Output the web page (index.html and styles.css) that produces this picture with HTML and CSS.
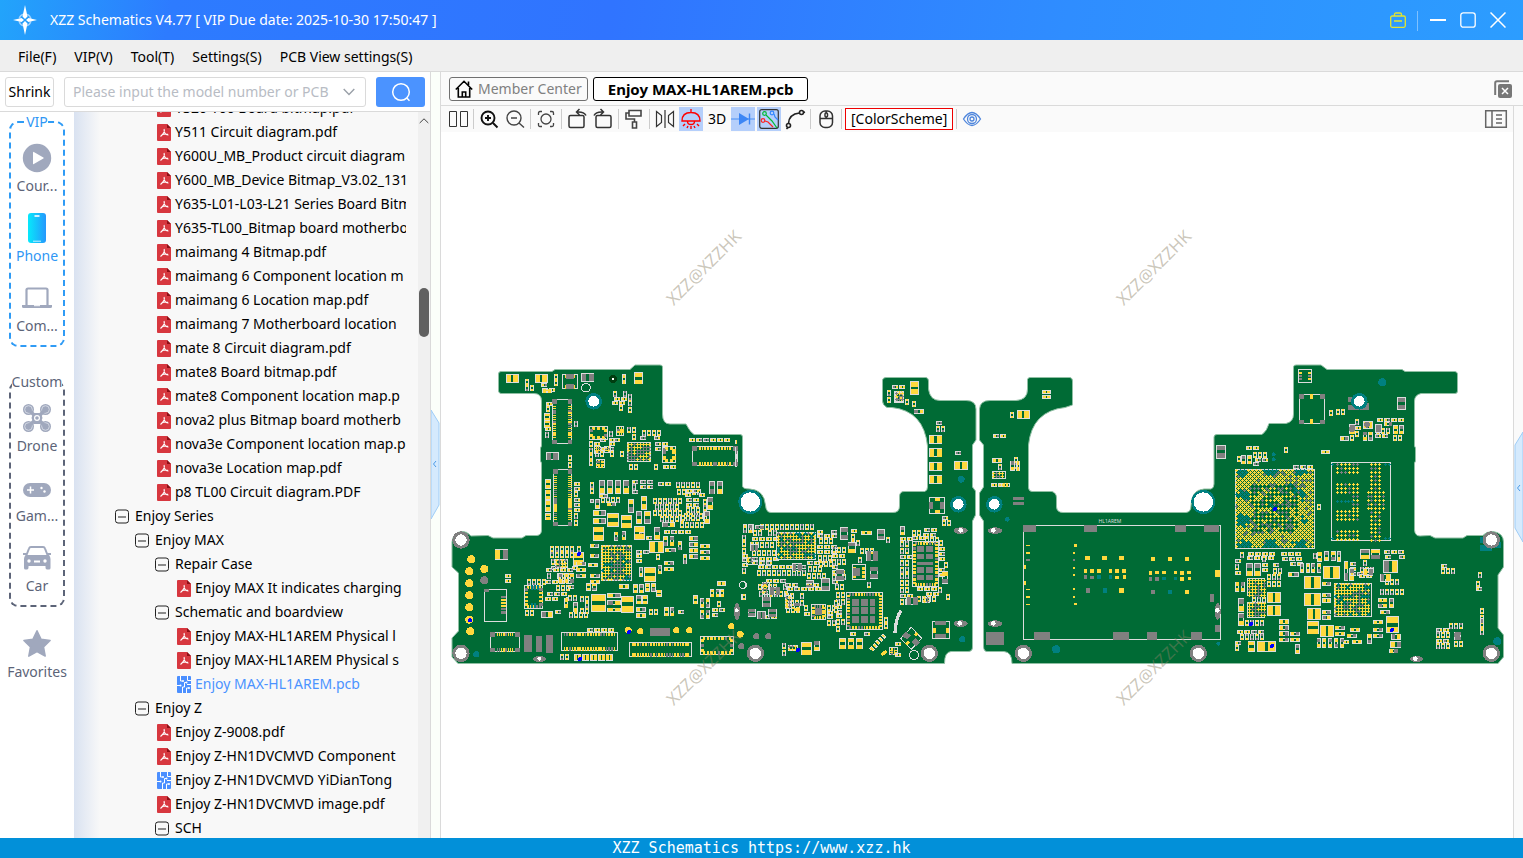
FILE: index.html
```html
<!DOCTYPE html>
<html lang="en">
<head>
  <meta charset="UTF-8" />
  <meta name="viewport" content="width=device-width, initial-scale=1.0" />
  <title>XZZ Schematics</title>
  <link rel="stylesheet" href="styles.css">
</head>
<body>
  <!-- shared icons -->
  <svg class="defs" aria-hidden="true">
    <symbol id="pdf" viewBox="0 0 14 17">
      <path d="M1 0h9l4 4v12a1 1 0 0 1-1 1H1a1 1 0 0 1-1-1V1a1 1 0 0 1 1-1z" fill="#d7373f"/>
      <path d="M10 0l4 4h-4z" fill="#8e0f16"/>
      <path d="M7 5c1 2 .5 4-3.500 7.500M7 6.500c.5 3 2 4.500 4.500 4.500M4.500 11c2-1 4-1.300 6.500-.8" fill="none" stroke="#fff" stroke-width="1.100"/>
    </symbol>
    <symbol id="pcb" viewBox="0 0 14 17">
      <rect width="14" height="17" rx="1" fill="#4b8fff"/>
      <path d="M3.500 0v5h2M0 9.500h3M5.500 17v-6h2V6.500h1.500M9.500 17v-5h2.500M14 4.500h-3.500V0M10 8.500h4" fill="none" stroke="#fff" stroke-width="1"/>
      <circle cx="6" cy="5" r="1" fill="#fff"/><circle cx="3.500" cy="9.500" r="1" fill="#fff"/><circle cx="9.500" cy="6.500" r="1" fill="#fff"/><circle cx="12" cy="12" r="1" fill="#fff"/>
    </symbol>
    <symbol id="minus" viewBox="0 0 14 14">
      <rect x=".5" y=".5" width="13" height="13" rx="2.500" fill="none" stroke="#222"/>
      <path d="M3 7.500h8" stroke="#222"/>
    </symbol>
  </svg>

  <header class="titlebar">
    <svg class="logo" viewBox="0 0 24 30">
      <circle cx="12" cy="15" r="6" fill="none" stroke="#9fd2ff" stroke-width="1.500" stroke-dasharray="6 3.400" stroke-dashoffset="-1.500"/>
      <path d="M12 0l2.500 11.500L12 14l-2.500-2.500zM12 30l2.500-11.500L12 16l-2.500 2.500zM0 15l8.500-2 2.500 2-2.500 2zM24 15l-8.500-2-2.500 2 2.500 2z" fill="#fff"/>
    </svg>
    <h1>XZZ Schematics V4.77 [ VIP Due date: 2025-10-30 17:50:47 ]</h1>
    <div class="window-buttons">
      <button aria-label="Toolbox"><svg viewBox="0 0 16 16" fill="none" stroke="#e3e52f" stroke-width="1.300"><rect x=".7" y="4" width="14.600" height="11.300" rx="1.500"/><path d="M4.500 4V2.500Q4.500 1 6 1h4q1.500 0 1.500 1.500V4M4 9h8"/></svg></button>
      <span class="divider"></span>
      <button aria-label="Minimize"><svg viewBox="0 0 16 16"><path d="M0 8h16" stroke="#fff" stroke-width="2"/></svg></button>
      <button aria-label="Maximize"><svg viewBox="0 0 16 16"><rect x=".8" y=".8" width="14.400" height="14.400" rx="2.500" fill="none" stroke="#fff" stroke-width="1.300"/></svg></button>
      <button aria-label="Close"><svg viewBox="0 0 16 16"><path d="M.5.5l15 15M15.500.5l-15 15" stroke="#fff" stroke-width="1.500"/></svg></button>
    </div>
  </header>

  <nav class="menubar">
    <button>File(F)</button>
    <button>VIP(V)</button>
    <button>Tool(T)</button>
    <button>Settings(S)</button>
    <button>PCB View settings(S)</button>
  </nav>

  <div class="workspace">
    <aside class="sidebar">
      <form class="search">
        <button type="button" class="shrink">Shrink</button>
        <div class="search-box">
          <input type="text" aria-label="Model number or PCB" placeholder="Please input the model number or PCB" />
          <svg viewBox="0 0 12 8"><path d="M.7 1L6 6.500 11.300 1" fill="none" stroke="#9aa0a8" stroke-width="1.400"/></svg>
        </div>
        <button type="button" class="search-go" aria-label="Search">
          <svg viewBox="0 0 20 20" fill="none" stroke="#fff" stroke-width="1.500"><circle cx="10" cy="10" r="8.300"/><path d="M15.800 16l2.700 2.700"/></svg>
        </button>
      </form>

      <div class="browser">
        <nav class="categories">
          <fieldset class="group vip">
            <legend>VIP</legend>
            <button class="cat"><svg viewBox="0 0 30 30"><circle cx="15" cy="15" r="14.200" fill="#a0a8bd"/><path d="M11 9.300v11.400q0 .8.800.4l9.600-5.500q.7-.5 0-1L11.800 9q-.8-.4-.8.300z" fill="#fff"/></svg>Cour...</button>
            <button class="cat active"><svg viewBox="0 0 30 30"><defs><linearGradient id="tel" x2="1" y2="0"><stop stop-color="#07e9fb"/><stop offset="1" stop-color="#2598fd"/></linearGradient></defs><rect x="6" width="18" height="30" rx="3" fill="url(#tel)"/><path d="M12.500 3h5" stroke="#fff" stroke-width="1.600"/><path d="M11 28.200h8" stroke="#c8f2ff"/></svg>Phone</button>
            <button class="cat"><svg viewBox="0 0 30 30"><path d="M4.500 23.500V7q0-1.500 1.500-1.500h18q1.500 0 1.500 1.500v16.500" fill="none" stroke="#a0a8bd" stroke-width="2.200"/><path d="M0 22h30v1.500q0 1.500-1.500 1.500h-27Q0 25 0 23.500z" fill="#a0a8bd"/><path d="M12 22.700h6" stroke="#fff" stroke-width="1"/></svg>Com...</button>
          </fieldset>
          <fieldset class="group custom">
            <legend>Custom</legend>
            <button class="cat"><svg viewBox="0 0 30 30"><g fill="#a0a8bd"><circle cx="6.500" cy="6.500" r="5.500"/><circle cx="23.500" cy="6.500" r="5.500"/><circle cx="6.500" cy="23.500" r="5.500"/><circle cx="23.500" cy="23.500" r="5.500"/></g><g fill="none" stroke="#dfe3ec" stroke-width=".8"><circle cx="6.500" cy="6.500" r="3.800"/><circle cx="23.500" cy="6.500" r="3.800"/><circle cx="6.500" cy="23.500" r="3.800"/><circle cx="23.500" cy="23.500" r="3.800"/></g><path d="M7 7l16 16M23 7L7 23" stroke="#a0a8bd" stroke-width="3.500"/><path d="M11 10h8l1.500 5-2.500 6h-6l-2.500-6z" fill="#a0a8bd"/><circle cx="15" cy="15" r="2.400" fill="none" stroke="#fff" stroke-width="1.200"/></svg>Drone</button>
            <button class="cat"><svg viewBox="0 0 30 30"><rect x="1" y="10" width="28" height="14" rx="7" fill="#a0a8bd"/><path d="M5 17h7M8.500 13.500v7" stroke="#fff" stroke-width="1.500"/><circle cx="19.500" cy="15" r="1.200" fill="#fff"/><circle cx="22.500" cy="18.500" r="1.200" fill="#fff"/></svg>Gam...</button>
            <button class="cat"><svg viewBox="0 0 30 30"><path d="M4.500 12L7 5.500Q7.500 4 9 4h12q1.500 0 2 1.500L25.500 12" fill="none" stroke="#a0a8bd" stroke-width="2"/><path d="M1 10h4v2h20v-2h4v2h-2q1.500 2 1.500 4v9q0 1.500-1.500 1.500h-2q-1.500 0-1.500-2V23h-17v1.500q0 2-1.500 2H3.500Q2 26.500 2 25v-9q0-2 1.500-4H1z" fill="#a0a8bd"/><circle cx="7" cy="18" r="1.700" fill="#fff"/><circle cx="23" cy="18" r="1.700" fill="#fff"/><path d="M12 18.500h6" stroke="#fff" stroke-width="2"/></svg>Car</button>
          </fieldset>
          <button class="cat favorites"><svg viewBox="0 0 30 30"><path d="M15 1.800l4.100 8.500 9 1.200-6.600 6.400 1.700 9.200-8.200-4.400-8.200 4.400 1.700-9.200-6.600-6.400 9-1.200z" fill="#a0a8bd" stroke="#a0a8bd" stroke-linejoin="round" stroke-width="1.500"/></svg>Favorites</button>
        </nav>

        <ul class="tree">
          <li class="lv2"><a href="#"><svg><use href="#pdf"/></svg>Y320-T00 Board bitmap.pdf</a></li>
          <li class="lv2"><a href="#"><svg><use href="#pdf"/></svg>Y511 Circuit diagram.pdf</a></li>
          <li class="lv2"><a href="#"><svg><use href="#pdf"/></svg>Y600U_MB_Product circuit diagram</a></li>
          <li class="lv2"><a href="#"><svg><use href="#pdf"/></svg>Y600_MB_Device Bitmap_V3.02_131</a></li>
          <li class="lv2"><a href="#"><svg><use href="#pdf"/></svg>Y635-L01-L03-L21 Series Board Bitm</a></li>
          <li class="lv2"><a href="#"><svg><use href="#pdf"/></svg>Y635-TL00_Bitmap board motherbo</a></li>
          <li class="lv2"><a href="#"><svg><use href="#pdf"/></svg>maimang 4 Bitmap.pdf</a></li>
          <li class="lv2"><a href="#"><svg><use href="#pdf"/></svg>maimang 6 Component location m</a></li>
          <li class="lv2"><a href="#"><svg><use href="#pdf"/></svg>maimang 6 Location map.pdf</a></li>
          <li class="lv2"><a href="#"><svg><use href="#pdf"/></svg>maimang 7 Motherboard location</a></li>
          <li class="lv2"><a href="#"><svg><use href="#pdf"/></svg>mate 8 Circuit diagram.pdf</a></li>
          <li class="lv2"><a href="#"><svg><use href="#pdf"/></svg>mate8 Board bitmap.pdf</a></li>
          <li class="lv2"><a href="#"><svg><use href="#pdf"/></svg>mate8 Component location map.p</a></li>
          <li class="lv2"><a href="#"><svg><use href="#pdf"/></svg>nova2 plus Bitmap board motherb</a></li>
          <li class="lv2"><a href="#"><svg><use href="#pdf"/></svg>nova3e Component location map.p</a></li>
          <li class="lv2"><a href="#"><svg><use href="#pdf"/></svg>nova3e Location map.pdf</a></li>
          <li class="lv2"><a href="#"><svg><use href="#pdf"/></svg>p8 TL00 Circuit diagram.PDF</a></li>
          <li class="lv0"><button><svg><use href="#minus"/></svg>Enjoy Series</button></li>
          <li class="lv1"><button><svg><use href="#minus"/></svg>Enjoy MAX</button></li>
          <li class="lv2"><button><svg><use href="#minus"/></svg>Repair Case</button></li>
          <li class="lv3"><a href="#"><svg><use href="#pdf"/></svg>Enjoy MAX It indicates charging</a></li>
          <li class="lv2"><button><svg><use href="#minus"/></svg>Schematic and boardview</button></li>
          <li class="lv3"><a href="#"><svg><use href="#pdf"/></svg>Enjoy MAX-HL1AREM Physical l</a></li>
          <li class="lv3"><a href="#"><svg><use href="#pdf"/></svg>Enjoy MAX-HL1AREM Physical s</a></li>
          <li class="lv3"><a href="#" class="current"><svg><use href="#pcb"/></svg>Enjoy MAX-HL1AREM.pcb</a></li>
          <li class="lv1"><button><svg><use href="#minus"/></svg>Enjoy Z</button></li>
          <li class="lv2"><a href="#"><svg><use href="#pdf"/></svg>Enjoy Z-9008.pdf</a></li>
          <li class="lv2"><a href="#"><svg><use href="#pdf"/></svg>Enjoy Z-HN1DVCMVD Component</a></li>
          <li class="lv2"><a href="#"><svg><use href="#pcb"/></svg>Enjoy Z-HN1DVCMVD YiDianTong</a></li>
          <li class="lv2"><a href="#"><svg><use href="#pdf"/></svg>Enjoy Z-HN1DVCMVD image.pdf</a></li>
          <li class="lv2"><button><svg><use href="#minus"/></svg>SCH</button></li>
        </ul>
        <div class="scrollbar">
          <svg viewBox="0 0 10 6"><path d="M.7 5L5 .8 9.300 5" fill="none" stroke="#444"/></svg>
          <span class="thumb"></span>
        </div>
      </div>
    </aside>

    <button class="splitter" aria-label="Collapse sidebar">
      <svg viewBox="0 0 9 110"><path d="M0 0l8 13v82L0 109z" fill="#d5eafd" stroke="#9fcdf7"/><path d="M5 51L2.500 54 5 57" fill="none" stroke="#4b9be8"/></svg>
    </button>

    <main class="viewer">
      <div class="tabs">
        <button class="tab home"><svg viewBox="0 0 18 18" fill="none" stroke="#000" stroke-width="1.600"><path d="M.8 9.500L9 1.300l8.200 8.200M3.300 8v9h11.400V8M7.300 17v-5h3.400v5M13.500 5V1.500"/></svg>Member Center</button>
        <button class="tab open">Enjoy MAX-HL1AREM.pcb</button>
        <button class="close-all" aria-label="Close all tabs"><svg viewBox="0 0 18 18"><path d="M1.200 15V3q0-1.800 1.800-1.800h12" fill="none" stroke="#777" stroke-width="2"/><rect x="4" y="4" width="14" height="14" rx="2" fill="#777"/><path d="M8 8l6 6M14 8l-6 6" stroke="#fff" stroke-width="1.500"/></svg></button>
      </div>

      <div class="view-row">
        <div class="view">
          <div class="toolbar">
            <button aria-label="Split view"><svg viewBox="0 0 24 24" fill="none" stroke="#333"><path d="M3.500 4.500h7v15h-7zM14.500 4.500h7v15h-7z"/></svg></button>
            <span class="sep"></span>
            <button aria-label="Zoom in"><svg viewBox="0 0 24 24" fill="none" stroke="#111" stroke-width="1.900"><circle cx="11" cy="11" r="6.500"/><path d="M16 16l4.500 4.500M8 11h6M11 8v6"/></svg></button>
            <button aria-label="Zoom out"><svg viewBox="0 0 24 24" fill="none" stroke="#444" stroke-width="1.400"><circle cx="11" cy="11" r="7"/><path d="M16 16l5 4.500M8 11h6"/></svg></button>
            <span class="sep"></span>
            <button aria-label="Fit"><svg viewBox="0 0 24 24" fill="none" stroke="#444" stroke-width="1.300"><circle cx="12" cy="12" r="5"/><path d="M4.500 8V6q0-1.500 1.500-1.500h2M16 4.500h2q1.500 0 1.500 1.500v2M19.500 16v2q0 1.500-1.500 1.500h-2M8 19.500H6q-1.500 0-1.500-1.500v-2"/></svg></button>
            <span class="sep"></span>
            <button aria-label="Rotate left"><svg viewBox="0 0 24 24" fill="none" stroke="#333" stroke-width="1.500"><rect x="4" y="8.500" width="15" height="12" rx="1.500"/><path d="M21 8.500Q19 4.500 12 5M14.500 2L11.500 5l3 3"/></svg></button>
            <button aria-label="Rotate right"><svg viewBox="0 0 24 24" fill="none" stroke="#333" stroke-width="1.500"><rect x="5" y="8.500" width="15" height="12" rx="1.500"/><path d="M3 8.500Q5 4.500 12 5M9.500 2l3 3-3 3"/></svg></button>
            <span class="sep"></span>
            <button aria-label="Paint"><svg viewBox="0 0 24 24" fill="none" stroke="#444" stroke-width="1.600"><path d="M7 3.500h12v5.500H7zM7 6H4v6h8.500v3M10.500 15h4v6h-4z"/></svg></button>
            <span class="sep"></span>
            <button aria-label="Mirror"><svg viewBox="0 0 24 24" fill="none" stroke="#333" stroke-width="1.200"><path d="M3.500 4.500v15l5-4v-7zM20.500 4.500v15l-5-4v-7zM12 3v18"/></svg></button>
            <button class="on" aria-label="Layer light"><svg viewBox="0 0 24 24" fill="none" stroke="#f00" stroke-width="1.400"><path d="M12 2v3M3 14q0-8.500 9-8.500t9 8.500zM8.500 14.500q0 3 3.500 3t3.500-3M6 17l-2 2M18 17l2 2M9 19l-1 2M15 19l1 2M12 19v3"/></svg></button>
            <button class="text">3D</button>
            <button class="on" aria-label="Diode"><svg viewBox="0 0 24 24"><path d="M0 12h24" stroke="#4a90f5" stroke-width="1"/><path d="M8 6v12l10-6z" fill="#3c86f5"/><path d="M18.500 6.500v11" stroke="#3c86f5" stroke-width="1.400"/></svg></button>
            <button class="on" aria-label="Nets"><svg viewBox="0 0 24 24" fill="none" stroke-width="1.200"><rect x="2.700" y="2.700" width="18.600" height="18.600" rx="2" stroke="#333"/><path d="M9 8l6 6 5 7" stroke="#0b3"/><circle cx="7.500" cy="6.500" r="1.800" stroke="#0b3"/><path d="M17 7l1 3 3 3" stroke="#38f"/><circle cx="15" cy="6" r="1.800" stroke="#38f"/><path d="M8 14l3 1 5 5" stroke="#f22"/><circle cx="6" cy="13.500" r="1.800" stroke="#f22"/></svg></button>
            <button aria-label="Trace"><svg viewBox="0 0 24 24" fill="none" stroke="#222" stroke-width="1.600"><circle cx="5.500" cy="18.500" r="2"/><circle cx="18.500" cy="5.500" r="2"/><path d="M5.500 16.500Q6 7 16.500 6M20.500 5.500l1.500-.5M5 20.500l-1.500 1.500"/></svg></button>
            <span class="sep"></span>
            <button aria-label="Mouse"><svg viewBox="0 0 24 24" fill="none" stroke="#333" stroke-width="1.500"><rect x="6" y="4" width="12.500" height="16.500" rx="5"/><path d="M6 11.500h12.500M12.200 4v2M12.200 9.500v2"/><rect x="11" y="6" width="2.500" height="4" rx="1"/></svg></button>
            <span class="sep"></span>
            <button class="scheme">[ColorScheme]</button>
            <span class="sep"></span>
            <button aria-label="Visibility"><svg viewBox="0 0 24 24" fill="none" stroke="#4f86dc" stroke-width="1.300"><path d="M3.500 12Q12-1 20.500 12 12 25 3.500 12z"/><circle cx="12" cy="12" r="4.500"/><circle cx="12" cy="12" r="2"/></svg></button>
            <button class="panel-toggle" aria-label="Toggle panel"><svg viewBox="0 0 24 24" fill="none" stroke="#666" stroke-width="1.500"><path d="M1.700 3.700h20.600v16.600H1.700zM8 3.700v16.600M12 8h6M12 12h6M12 16h6"/></svg></button>
          </div>
          <svg class="board" id="board" viewBox="441 132 1072 706" role="img" aria-label="HL1AREM board view"></svg>
        </div>
        <button class="splitter right" aria-label="Expand panel">
          <svg viewBox="0 0 9 110"><path d="M9 0L1 13v83l8 14z" fill="#d5eafd" stroke="#9fcdf7"/><path d="M6 53L3.500 56 6 59" fill="none" stroke="#4b9be8"/></svg>
        </button>
      </div>
    </main>
  </div>

  <footer class="statusbar">XZZ Schematics https://www.xzz.hk</footer>

  <script src="board.js"></script>
</body>
</html>
```

FILE: styles.css
```css
:root {
  --line: #dadada;
  --blue: #4b93ff;
  --on: #b5cffb;
  --text: #000;
  --muted: #5c6478;
}

* {
  box-sizing: border-box;
}

body {
  margin: 0;
  height: 100vh;
  display: flex;
  flex-direction: column;
  overflow: hidden;
  font-family: "Noto Sans", "Open Sans", sans-serif;
  font-size: 14px;
  line-height: 20px;
  color: var(--text);
  background: #fff;
}

button, input {
  font: inherit;
  color: inherit;
}

button {
  padding: 0;
  border: 0;
  background: none;
  cursor: pointer;
}

svg {
  display: block;
  flex: none;
}

.defs {
  position: absolute;
  width: 0;
  height: 0;
}

/* title bar */
.titlebar {
  display: flex;
  align-items: center;
  height: 40px;
  flex: none;
  padding: 0 17px 0 13px;
  color: #fff;
  background: linear-gradient(100deg, #22a4fb 0, #2d7bff 170px, #3074ff 40%, #2f8dff 70%, #2c9dff 100%);
}

.logo {
  width: 24px;
  height: 30px;
}

.titlebar h1 {
  margin: 0 auto 0 13px;
  font-size: 14px;
  font-weight: 400;
}

.window-buttons {
  display: flex;
  align-items: center;
  gap: 14px;
}

.window-buttons svg {
  width: 16px;
  height: 16px;
}

.window-buttons .divider {
  width: 1px;
  height: 20px;
  margin: 0 -2px -1px -3px;
  background: #7fc1ff;
}

/* menu */
.menubar {
  display: flex;
  align-items: center;
  gap: 18px;
  height: 32px;
  flex: none;
  padding: 2px 18px 0;
  background: #efefef;
  border-bottom: 1px solid var(--line);
}

.workspace {
  display: flex;
  flex: 1;
  min-height: 0;
}

/* sidebar */
.sidebar {
  display: flex;
  flex-direction: column;
  width: 431px;
  flex: none;
  border-right: 1px solid var(--line);
}

.search {
  display: flex;
  align-items: center;
  height: 40px;
  flex: none;
  padding: 0 5px;
  border-bottom: 1px solid var(--line);
}

.shrink {
  width: 49px;
  height: 30px;
  border: 1px solid var(--line);
  border-radius: 3px;
}

.search-box {
  display: flex;
  align-items: center;
  flex: 1;
  height: 30px;
  margin: 0 10px;
  padding: 0 10px 0 8px;
  border: 1px solid var(--line);
  border-radius: 3px;
}

.search-box input {
  flex: 1;
  min-width: 0;
  padding: 0;
  border: 0;
  outline: 0;
  background: none;
}

.search-box input::placeholder {
  color: #b8bcc4;
}

.search-box svg {
  width: 12px;
  height: 8px;
}

.search-go {
  display: grid;
  place-items: center;
  width: 49px;
  height: 30px;
  border-radius: 3px;
  background: var(--blue);
}

.search-go svg {
  width: 20px;
  height: 20px;
}

.browser {
  display: flex;
  flex: 1;
  min-height: 0;
}

.categories {
  width: 74px;
  flex: none;
  padding: 0 9px;
  color: var(--muted);
}

.group {
  min-width: 0;
  margin: 0 0 25px;
  padding: 11px 0 9px;
  border: 2px dashed #2f9bf5;
  border-radius: 9px;
}

.group legend {
  margin: 0 auto;
  padding: 0;
}

.vip legend,
.cat.active {
  color: #2f97f5;
}

.custom {
  border-color: var(--muted);
  margin-bottom: 22px;
}

.cat {
  display: flex;
  flex-direction: column;
  align-items: center;
  gap: 3px;
  width: 100%;
  white-space: nowrap;
}

.cat + .cat {
  margin-top: 17px;
}

.cat svg {
  width: 30px;
  height: 30px;
}

/* file tree */
.tree {
  flex: 1;
  min-width: 0;
  margin: 0;
  padding: 0 12px 0 41px;
  list-style: none;
  overflow: hidden;
  background: linear-gradient(90deg, #d9e2f1, #f8f8f8 26px);
}

.tree li {
  height: 24px;
  overflow: hidden;
  white-space: nowrap;
}

.tree li:first-child {
  margin-top: -16px;
}

.tree a,
.tree button {
  display: flex;
  align-items: center;
  height: 24px;
  color: inherit;
  text-decoration: none;
}

.tree a.current {
  color: var(--blue);
}

.tree svg {
  width: 14px;
  height: 17px;
  margin-right: 6px;
}

.tree a svg {
  margin: 0 4px 0 2px;
}

.lv1 { padding-left: 20px; }
.lv2 { padding-left: 40px; }
.lv3 { padding-left: 60px; }

.scrollbar {
  width: 12px;
  padding: 6px 1px;
  background: #f0f0f0;
}

.scrollbar svg {
  width: 10px;
  height: 6px;
}

.thumb {
  display: block;
  width: 10px;
  height: 49px;
  margin-top: 164px;
  border-radius: 5px;
  background: #606060;
}

.splitter {
  display: flex;
  align-items: center;
  width: 10px;
  flex: none;
  padding-top: 20px;
  background: #fbfffa;
  border-right: 1px solid var(--line);
}

.splitter svg {
  width: 9px;
  height: 110px;
}

.splitter.right {
  padding-top: 30px;
  background: #fafafa;
  border-right: 0;
  border-left: 1px solid var(--line);
}

/* viewer */
.viewer {
  display: flex;
  flex-direction: column;
  flex: 1;
  min-width: 0;
}

.tabs {
  display: flex;
  align-items: center;
  gap: 5px;
  height: 34px;
  flex: none;
  padding: 0 11px 0 8px;
  background: #fafafa;
  border-bottom: 1px solid var(--line);
}

.tab {
  display: flex;
  align-items: center;
  height: 24px;
  padding: 0 5px;
  border: 1px solid #707070;
  border-radius: 3px;
  color: #808080;
}

.tab svg {
  width: 18px;
  height: 18px;
  margin-right: 5px;
}

.tab.open {
  padding: 0 14px;
  border-color: #000;
  color: #000;
  font-size: 15px;
  font-weight: 700;
  background: #fff;
}

.close-all {
  margin-left: auto;
}

.close-all svg {
  width: 18px;
  height: 18px;
}

.view-row {
  display: flex;
  flex: 1;
  min-height: 0;
}

.view {
  display: flex;
  flex-direction: column;
  flex: 1;
  min-width: 0;
}

.toolbar {
  display: flex;
  align-items: center;
  gap: 2px;
  height: 26px;
  flex: none;
  padding: 0 5px;
  background: #fafafa;
}

.toolbar button,
.toolbar svg {
  width: 24px;
  height: 24px;
}

.toolbar .on {
  background: var(--on);
}

.toolbar .sep {
  width: 1px;
  height: 20px;
  margin: 0 1px;
  background: #ccc;
}

.toolbar .scheme {
  width: auto;
  height: 22px;
  padding: 0 5px;
  border: 1px solid #e00;
  line-height: 20px;
  background: #fff;
}

.toolbar .panel-toggle {
  margin-left: auto;
}

.board {
  width: 100%;
  flex: 1;
  min-height: 0;
}

.board .silk {
  fill: none;
  stroke: #dcdcdc;
  stroke-width: 3;
}

.board .edge {
  fill: #006b35;
  stroke: #8fbfa3;
  stroke-width: 1;
}

.board .mark {
  font-size: 17px;
  fill: #8c8268;
  fill-opacity: .45;
  text-anchor: middle;
}

.board .ref {
  font-size: 5px;
  fill: #dcdcdc;
  text-anchor: middle;
}

.statusbar {
  height: 20px;
  flex: none;
  text-align: center;
  color: #fff;
  background: #0290d9;
  font-family: "DejaVu Sans Mono", monospace;
  font-size: 15px;
}
```

FILE: board.js
```js
const COLORS = { y: "#ffd83d", g: "#808080", t: "#008080", b: "#0000ff", w: "#ffffff", s: "#dcdcdc", k: "#003d10", n: "#006b35" };

// board edges, in view units
const OUTLINES = [
  "M501 371.500H552L555 369.500H630L635 365H660Q662.500 365 662.500 367V414Q662.500 424 670 424H686Q690 432 694 434.500H740Q742.500 434.500 742.500 437V486Q742.500 489 750 489Q764 490 765.500 505Q766 512.500 771 512.500H893Q899.500 512.500 899.500 506V497Q899.500 491.500 904 491.500H925Q927.500 490 927.500 487V446Q924 411 892 407.500H887Q882.500 405 882.500 401V380Q883 377.500 886 377.500H926Q928.500 378 928.500 381V389Q930 400.500 940 400.500H966Q976 400.500 976 409V440L972.500 445V487L975.500 491V515L972.500 521V647Q972.500 651.500 968 651.500H951Q944.500 652 944.500 663.500H458L452 657V638L458.500 631V573L452 567V542Q453 533 461 531.500Q467 531 471 536L488 535.500L493 538H522L526 535.500H537Q541.500 535 541.500 530V463L540.500 461V448L541.500 446V401Q541.500 393.500 534 393.500H501Q498.500 393 498.500 391V374Q498.500 371.500 501 371.500Z",
  "M979.500 409Q980 400.500 990 400.500H1016Q1027.500 400 1027.500 389V379.500Q1028 377.500 1030 377.500H1070Q1072.500 378 1072.500 381V405L1065 407.500Q1032 411 1028.500 445V488Q1029 491.500 1032 491.500H1052Q1056.500 493 1056.500 498V507Q1057 512.500 1063 512.500H1186Q1191 512 1191 506Q1191 490 1204 489H1211Q1214 488 1214 484V437Q1214 434.500 1217 434.500H1262Q1267 431 1269 423.500H1286Q1293.500 422 1293.500 414V367Q1293.500 365 1296 365H1321L1327 369.500H1402L1405 371.500H1455Q1457.500 372 1457.500 374V391Q1457.500 393.500 1455 393.500H1421Q1414.500 395 1414.500 401V446L1415.500 448V461L1414.500 463V530Q1415 536 1420 536L1430 535.500L1435 538H1463L1467 535.500H1483Q1486 531.500 1493 531.500Q1503.500 533 1503.500 542V567L1498 575V628L1503.500 635V657L1498 663.500H1012Q1012 652 1004 651.500H988Q983.500 652 983.500 646V521L979.500 515V493L983.500 487V445L979.500 440Z"
];

// Each sheet is drawn at three units per view unit from its own origin.
// parts: x y w h padColors    chips: x y w h padsAcross padsDown corner(0/1)
// fields: x y w h fill%       balls: x y w h pitch colors
// dots: x y r color           holes: x y outer inner color
const SHEETS = [
  {
    origin: [445, 355],
    parts: `183 58 38 25 yy;270 58 38 25 yy;408 55 40 25 gg;531 58 11 30 yy;567 52 26 36 yy;303 291 38 25 gg;291 101 29 14 yy;
      297 174 19 24 yy;297 196 19 22 yy;462 376 17 40 gy;486 376 17 40 gy;510 376 17 40 gy;534 376 19 40 gy;792 378 17 40 gg;816 378 17 40 gy;
      550 432 16 41 yg;588 423 17 41 yy;574 468 16 38 gy;598 468 19 38 yg;786 426 19 38 gy;778 468 16 38 gy;445 466 38 16 yg;445 490 38 16 yg;
      486 474 35 42 yy;528 480 32 40 yy;444 515 32 42 yy;567 514 32 40 yy;628 517 18 38 gy;652 502 38 15 gy;612 559 44 34 yy;598 636 34 44 yy;
      438 718 45 52 yy;528 723 38 50 yy;385 592 31 40 yy;149 583 41 31 yg;732 544 28 13 yg;732 562 28 13 gy;732 580 28 13 yy;732 598 28 13 yg;
      765 567 29 13 yy;765 585 29 13 yg;765 603 29 13 yy;435 566 27 13 yg;435 596 27 12 yg;430 624 28 12 yy;462 418 26 11 yg;485 442 28 12 yg;
      393 620 30 13 yg;393 638 30 13 yy;393 656 30 13 gy;435 656 30 13 yg;435 674 30 13 yy;486 714 42 15 yg;486 736 42 15 gy;486 758 42 13 yy;
      565 688 14 27 yy;583 688 14 27 gy;601 684 14 27 yy;618 684 14 27 yg;574 720 16 28 gy;592 720 16 28 yy;574 756 28 14 yg;574 774 28 14 yy;
      423 684 15 24 yy;440 684 15 24 yg;521 688 30 13 yy;658 756 13 28 yy;675 756 13 28 gy;816 678 26 14 yy;796 702 12 25 yy;812 702 12 25 gy;826 702 12 25 yy;
      766 730 12 28 gy;782 730 12 28 yg;766 764 12 28 yg;782 764 12 28 gy;744 720 14 28 yy;288 768 36 20 gy;
      387 898 22 19 yy;411 898 22 19 yy;435 898 22 19 yy;459 898 22 19 yy;482 898 22 19 yy;655 544 14 30 yg;674 544 14 30 gy;698 558 12 28 yg;
      658 618 28 13 yg;658 636 28 13 yy;638 630 12 28 gy;714 598 12 30 yg;582 636 12 30 gy;634 704 16 22 yy;300 372 17 30 yy;300 404 17 30 yy;300 436 17 34 yy;300 474 17 22 yy;
      660 580 32 12 yg;508 530 12 28 yg;530 528 12 28 gy;450 432 14 30 gy;340 655 14 30 gy;357 655 14 30 yy;374 655 14 30 yg;384 742 14 30 gy;358 728 12 32 yy;436 432 10 12 gg`,
    chips: `352 58 48 45 2 0 0;322 133 60 135 0 15 1;325 343 57 171 0 22 1;433 214 55 40 3 2 0;742 274 136 60 12 0 1;652 274 42 50 2 2 0;
      118 703 67 99 0 0 0;238 691 57 70 5 5 0;136 832 88 60 8 0 1;349 832 169 57 20 0 0;553 862 187 45 22 0 0;766 844 100 57 8 3 0;514 214 24 28 2 2 0;452 312 28 28 2 2 0;478 272 20 22 2 2 0;447 272 22 24 2 2 0`,
    fields: `303 125 18 45 90;300 215 18 30 90;388 180 18 45 90;388 380 20 155 85;433 258 15 82 95;492 216 20 84 90;445 250 90 65 70;545 205 25 52 90;585 225 64 32 90;
      545 328 42 16 95;612 328 34 14 80;630 260 40 35 70;655 330 40 14 80;370 300 16 30 90;436 380 22 45 90;560 376 18 40 90;585 376 32 28 90;630 380 55 24 90;
      690 380 80 40 95;622 430 94 78 92;716 402 55 84 95;700 480 76 30 90;655 524 90 18 90;775 412 18 140 70;328 58 16 30 90;240 72 30 32 80;285 85 44 24 70;
      500 108 48 68 85;550 118 16 54 90;330 112 64 10 50;466 425 56 16 80;310 574 80 70 85;300 640 84 100 85;395 572 22 14 90;180 658 22 34 90;
      240 672 60 14 70;240 766 30 18 80;330 766 18 18 80;365 772 70 16 90;400 818 110 12 90;345 898 40 20 90;730 250 148 16 90;612 762 26 24 90;
      700 764 18 18 90;800 738 34 54 65;404 724 28 44 80;556 530 60 24 70;574 570 30 55 70;632 596 30 18 90;370 690 24 50 70;888 716 16 20 90`,
    balls: `546 262 72 60 9 yyyg;468 570 94 108 9 yyyygt;330 612 40 26 9 yyyg`,
    rects: `363 57 24 15 g;363 87 24 15 g;237 841 24 50 g;273 843 18 48 g;303 841 21 52 g;614 820 61 23 g;
      168 724 16 6 g;168 733 16 6 y;168 742 16 6 y;168 751 16 6 y;168 760 16 6 g;168 769 16 9 g;118 703 14 9 g;258 691 6 15 t;267 691 6 15 t;276 691 6 15 t;258 744 6 15 t;267 744 6 15 t`,
    ellipses: `283 912 20 9;876 769 9 26`,
    dots: `79 613 12 y;73 649 12 y;118 642 12 y;118 676 12 g;73 685 12 y;73 721 12 y;73 757 12 y;73 794 12 y;75 796 6 b;76 829 12 y;550 826 10 y;552 831 6 b;586 829 9 y;694 826 9 y;733 826 9 y;859 814 9 y;
      886 838 9 y;934 844 9 g;889 874 9 g;94 898 9 t;402 597 6 b;405 912 6 b;283 911 6 w;875 766 6 w`,
    holes: `446 139 25 16 t;48 555 26 17 g;48 895 26 17 g;931 895 26 17 g;916 441 36 29 t;504 72 12 4 k`,
    rings: `423 98 13;893 690 10`
  },
  {
    origin: [735, 370],
    parts: `525 34 26 40 yy;582 195 40 26 yy;582 234 40 28 yy;582 276 40 26 yy;582 315 40 26 yy;658 273 40 26 yy;536 117 30 15 gy;846 120 38 26 yy;921 60 26 12 yy;921 75 26 12 yy;
      316 472 24 38 gg;338 516 24 34 gy;426 478 24 32 gg;394 542 36 32 gg;302 598 26 34 gg;404 590 26 36 gg;258 624 26 38 gg;198 816 32 40 yy;312 804 20 34 yy;338 804 20 34 yy;364 804 20 34 yy;
      378 482 32 12 yy;620 603 20 38 yg;24 462 12 28 yg;40 462 14 28 gy;60 466 28 12 gg;495 468 14 28 gy;236 812 18 30 gy;844 272 11 32 yy;825 272 14 30 gy;772 264 28 14 yy;
      172 580 30 24 gg;212 630 24 24 gg;104 650 32 26 gg;82 680 26 32 gg;514 680 36 26 gg;38 716 24 24 gg;100 716 26 26 gg;66 724 26 24 gg;46 522 24 22 gg;176 698 20 26 gy;0 209 7 14 yy;0 230 7 60 gg`,
    chips: `334 667 109 113 11 11 0;532 514 79 136 8 12 0;229 703 45 46 4 4 0;352 583 40 48 0 3 0;583 381 46 50 1 0 0;592 754 52 52 0 1 0;478 62 30 36 3 3 0;798 338 28 14 2 0 0;462 832 26 24 2 2 0`,
    fields: `457 38 14 60 90;472 34 38 28 80;510 88 18 26 80;530 94 28 24 70;604 152 28 34 80;660 242 18 20 90;622 438 26 32 80;768 192 42 16 90;768 282 42 16 80;768 338 34 14 90;
      788 250 20 12 80;838 260 18 90 65;820 300 20 20 80;825 126 10 18 90;
      22 494 22 110 80;44 462 80 70 90;100 462 140 22 95;46 540 80 44 90;62 584 150 44 96;210 574 60 44 92;244 480 56 110 92;290 530 40 120 80;66 628 90 60 85;150 640 104 32 92;
      146 668 60 56 85;22 672 16 18 90;40 736 104 22 70;206 704 20 42 90;276 704 24 60 85;302 666 28 114 90;348 476 26 60 80;454 482 14 40 90;372 534 64 14 80;370 560 18 20 90;
      396 636 34 16 90;300 642 30 14 90;496 500 32 204 95;530 480 34 28 95;564 474 50 38 90;612 510 24 110 85;544 652 60 46 92;600 650 44 34 70;446 740 14 30 90;340 786 60 16 80;
      142 820 16 40 90;236 842 28 12 80;480 816 22 52 70;296 690 16 60 70`,
    balls: `124 485 118 84 9 yyygt;770 304 42 24 9 yyyg;480 66 26 30 9 yyg;150 676 22 40 9 yyg;562 680 22 18 9 yyg;158 824 30 18 9 yyg;80 636 24 40 9 yyg;34 560 20 24 9 yyg`,
    rects: `350 686 22 22 g;377 686 22 22 g;404 686 16 22 g;350 711 22 22 g;377 711 22 22 g;404 711 16 22 g;350 738 22 22 g;377 738 22 22 g;404 738 16 22 g;
      546 528 21 18 g;573 528 21 18 g;546 552 21 15 g;573 552 21 15 g;546 576 48 9 g;546 591 21 18 g;573 591 21 18 g;546 614 21 15 g;573 614 21 15 g;240 714 21 21 g;354 594 21 24 g;
      583 396 12 21 g;615 396 12 21 g;600 754 33 12 g;600 793 33 12 g;753 786 54 39 g;834 381 33 9 g;834 396 33 9 g`,
    ellipses: `677 482 21 10;780 482 21 10;677 761 21 10;780 761 21 10`,
    dots: `16 793 10 y;64 799 9 g;100 799 9 g;19 829 9 g;189 840 6 b;679 328 10 t;682 808 9 t;817 448 7 t;963 838 12 t;677 481 7 w;775 481 7 w;674 760 7 w;775 760 7 w`,
    holes: `670 403 25 16 t;778 403 25 16 t;583 850 26 17 g;865 850 26 17 g`,
    rings: `24 645 11;537 855 14`,
    extra: `<path d="M499 722Q482 742 480 790" fill="none" stroke="#dcdcdc" stroke-width="10"/>
      <path class="silk" d="M529 772L560 805L529 838L497 805Z"/><path d="M502 797l12-12 14 12-12 12zM530 817l12-12 14 12-12 12z" fill="#808080"/><path d="M536 794l8-8 6 6-8 8zM510 820l8-8 6 6-8 8z" fill="#ffd83d"/>
      <path d="M408 840L452 792" fill="none" stroke="#dcdcdc" stroke-width="15" stroke-dasharray="9 4"/><path d="M409 839L452 792" fill="none" stroke="#ffd83d" stroke-width="9" stroke-dasharray="6 7"/><path d="M440 855l14-12" stroke="#ffd83d" stroke-width="9"/>`
  },
  {
    origin: [1180, 355],
    parts: `108 270 29 41 gg;651 126 26 38 gg;372 664 50 37 yy;372 714 50 38 yy;429 633 50 38 yy;381 759 41 35 yy;381 799 35 39 yy;421 811 40 34 yy;261 711 41 32 yy;261 750 41 32 yy;
      198 624 20 40 gy;222 624 20 40 gy;175 730 18 40 gy;175 774 18 38 gy;203 858 21 33 yy;231 858 56 33 yy;618 784 38 50 yy;610 615 43 38 gy;
      298 793 28 15 yy;298 811 28 15 yg;298 829 28 15 yg;298 848 28 13 yg;330 830 29 13 yg;330 848 29 13 yy;345 868 14 28 gy;426 680 26 13 yg;426 714 26 13 yg;426 730 26 13 yy;426 765 26 13 yg;426 781 26 13 gy;
      412 590 15 30 yy;432 588 15 30 gy;452 588 15 30 yg;472 588 11 32 gy;492 618 13 60 yg;508 640 15 38 gy;540 583 29 30 gy;572 583 29 30 yg;550 640 30 22 yg;600 656 32 24 gy;
      410 850 12 28 gy;427 850 12 28 yy;445 850 12 28 gy;463 850 12 28 yg;481 850 12 28 gy;464 812 30 13 yg;464 830 30 13 yy;510 818 30 13 yy;500 836 30 13 yg;516 854 30 13 yy;
      579 795 29 13 yy;579 818 29 13 yg;579 836 29 13 yg;562 836 13 30 yg;594 730 28 12 yy;594 746 28 12 gy;600 765 30 13 yg;627 730 14 28 gy;634 836 28 18 gy;630 858 34 20 yg;627 881 28 14 yg;
      324 652 32 13 yg;360 624 12 30 gy;378 624 12 30 yy;394 624 12 30 gy;412 624 12 30 yg;183 300 14 28 gy;201 300 14 28 yy;612 200 25 14 yg;640 210 15 28 yy;657 210 15 28 gy;550 198 28 24 yy;508 208 18 30 gy;586 208 20 26 gg;
      480 244 26 13 yg;548 230 14 28 gy;564 230 14 28 yg;424 286 26 11 yy;900 790 12 36 gy;822 830 22 26 gg;166 680 12 30 yy;182 680 12 30 gy`,
    chips: `355 43 40 40 0 3 0;358 118 76 90 0 0 1`,
    fields: `446 166 22 38 80;468 162 32 18 90;524 192 20 56 90;584 190 84 12 90;582 220 50 40 75;510 240 22 20 80;640 240 32 20 80;176 272 70 12 70;218 292 48 38 85;170 304 12 20 80;312 276 10 18 90;
      426 272 24 12 90;336 330 76 12 90;410 446 10 18 90;166 590 24 80 75;196 590 84 22 95;246 604 20 50 90;260 656 40 36 90;280 624 24 30 80;302 590 58 52 80;400 594 14 26 80;510 604 30 60 80;
      530 616 54 60 70;612 586 60 28 85;596 672 68 20 90;594 702 76 16 90;196 726 60 12 90;166 706 20 22 90;190 796 60 16 90;164 826 90 20 70;164 858 20 32 85;778 628 50 24 70;894 634 12 46 90;
      888 678 26 36 90;900 760 12 90 80;806 804 40 16 80;768 820 40 58 85;806 858 40 20 80;490 812 20 60 60`,
    balls: `462 683 114 104 9 yyyygt;202 670 52 52 9 yyyg;202 741 52 48 9 yyyg`,
    rects: `504 126 14 14 g;504 150 60 16 g;554 144 12 22 g;390 118 9 15 y;390 193 9 15 y;900 546 26 18 t;900 570 36 17 t;940 560 23 20 t;0 511 18 20 g;72 511 45 20 g;
      105 645 15 20 y;90 717 12 24 g;105 810 14 20 g;33 831 33 24 g`,
    ellipses: `709 912 20 9`,
    dots: `607 82 12 t;281 298 6 t;281 313 6 t;952 859 12 t;213 807 6 b;276 873 6 b;636 825 6 b;706 911 7 w;115 866 6 t;561 209 9 g;516 222 9 g;596 220 8 g;831 841 9 g`,
    holes: `538 139 25 16 t;70 441 36 29 t;934 555 26 17 g;55 895 26 17 g;934 895 26 17 g`,
    rings: ""
  },
  {
    origin: [975, 480],
    parts: "",
    chips: "145 136 592 345 0 0 0",
    fields: "",
    balls: "",
    rects: `145 136 38 20 g;327 136 39 20 g;600 136 33 20 g;687 136 45 20 g;177 456 48 24 g;414 456 48 24 g;516 456 30 24 g;648 456 33 24 g;33 456 54 39 g;720 270 15 21 y;705 342 12 24 g;720 435 15 21 g;
      153 195 12 3 y;153 216 12 6 y;153 237 12 6 g;147 255 6 12 y;147 303 6 12 y;153 327 12 3 y;153 348 12 6 y;153 372 12 3 y;
      297 192 9 9 y;294 216 6 6 y;294 237 6 6 g;294 261 6 6 y;294 282 6 6 y;294 324 6 6 y;294 348 6 6 y;297 369 9 6 y;
      330 228 15 12 y;381 228 15 12 y;432 228 15 12 y;327 267 9 12 y;345 267 12 12 y;366 267 12 12 y;402 267 9 12 y;420 267 12 12 y;441 267 12 12 y;
      327 285 9 12 g;345 288 12 9 g;366 285 12 12 t;402 285 9 12 t;420 288 12 9 y;444 285 9 12 y;333 324 12 15 g;384 324 12 15 t;432 324 15 15 y;
      528 231 12 12 y;579 231 12 12 y;630 231 12 12 y;522 273 9 12 y;540 273 12 9 y;561 273 12 9 y;597 273 9 9 y;615 273 12 12 y;636 273 12 9 y;
      522 291 9 12 g;540 291 12 12 g;561 291 12 9 t;597 291 9 9 t;615 291 12 12 y;639 291 9 9 y;528 330 12 12 g;579 330 12 12 t;630 330 12 12 y`,
    ellipses: "728 394 9 25",
    dots: "727 391 7 w;244 508 12 t;97 118 6 t",
    holes: "",
    rings: ""
  }
];

let seed = 7;
function rand() {
  seed = (seed * 16807) % 2147483647;
  return seed / 2147483647;
}

// sheets have three units per view unit
function snap(v) {
  return Math.round(v / 3) * 3;
}

function rows(text) {
  return text.split(";").map(r => r.trim()).filter(Boolean).map(r => r.split(/\s+/).map(v => isNaN(v) ? v : Number(v)));
}

function rect(x, y, w, h, c) {
  return `<rect x="${x}" y="${y}" width="${w}" height="${h}" fill="${COLORS[c]}"/>`;
}

function silk(x, y, w, h) {
  const left = snap(x), top = snap(y);
  return `<rect class="silk" x="${left + 1.5}" y="${top + 1.5}" width="${snap(x + w) - left - 3}" height="${snap(y + h) - top - 3}"/>`;
}

// two-terminal part, pads at the ends of its long side
function part([x, y, w, h, c]) {
  const iw = w - 4, ih = h - 4;
  let out = silk(x, y, w, h);
  if (w > h) {
    const p = Math.round(iw * 0.4);
    out += rect(x + 2, y + 2, p, ih, c[0]) + rect(x + w - 2 - p, y + 2, p, ih, c[1]);
  } else {
    const p = Math.round(ih * 0.38);
    out += rect(x + 2, y + 2, iw, p, c[0]) + rect(x + 2, y + h - 2 - p, iw, p, c[1]);
  }
  return out;
}

function chip([x, y, w, h, nx, ny, corner]) {
  let out = silk(x, y, w, h);
  const inset = corner ? 18 : 6;
  for (let i = 0; i < nx; i++) {
    const step = (w - inset * 2) / nx;
    const size = Math.min(15, step * 0.65);
    const px = x + inset + i * step + (step - size) / 2;
    out += rect(px, y + 2, size, 10, rand() < .8 ? "y" : "g") + rect(px, y + h - 12, size, 10, rand() < .8 ? "y" : "g");
  }
  for (let i = 0; i < ny; i++) {
    const step = (h - inset * 2) / ny;
    const size = Math.min(15, step * 0.65);
    const py = y + inset + i * step + (step - size) / 2;
    out += rect(x + 2, py, 10, size, rand() < .75 ? "y" : "g") + rect(x + w - 12, py, 10, size, rand() < .75 ? "y" : "g");
  }
  if (corner) {
    out += rect(x, y, 14, 14, "g") + rect(x + w - 14, y, 14, 14, "g") + rect(x, y + h - 14, 14, 14, "g") + rect(x + w - 14, y + h - 14, 14, 14, "g");
  }
  return out;
}

// area packed with the smallest passives
function field([x, y, w, h, fill]) {
  let out = "";
  let cy = snap(y);
  while (cy + 9 <= y + h) {
    const wide = rand() < .5 && w >= 18;
    const pw = wide ? 18 : 12, ph = wide ? 12 : 18;
    let cx = snap(x + (w > 40 ? rand() * 9 : 0));
    while (cx + 9 <= x + w) {
      if (rand() * 100 < fill) {
        const a = rand() < .82 ? "y" : "g", b = rand() < .7 ? "y" : "g";
        out += rect(cx, cy, pw, ph, "s");
        if (wide) {
          out += rect(cx + 3, cy + 3, 3, 6, a) + rect(cx + 6, cy + 3, 3, 6, a) + rect(cx + 9, cy + 3, 3, 6, "n") + rect(cx + 12, cy + 3, 6, 6, b);
        } else {
          out += rect(cx + 3, cy, 6, 6, a) + rect(cx + 3, cy + 6, 6, 6, "n") + rect(cx + 3, cy + 12, 6, 6, b);
        }
      }
      cx += pw + 3;
    }
    cy += ph + (rand() < .6 ? 3 : 0);
  }
  return out;
}

function cross(x, y) {
  const cx = snap(x), cy = snap(y);
  return `M${cx - 3} ${cy}h9v3h-9zM${cx} ${cy - 3}h3v9h-3z`;
}

function ballPaths(paths) {
  return Object.keys(paths).map(c => `<path d="${paths[c]}" fill="${COLORS[c]}"/>`).join("");
}

function balls([x, y, w, h, pitch, mix]) {
  const paths = {};
  for (let by = y + 4; by < y + h - 2; by += pitch) {
    for (let bx = x + 4; bx < x + w - 2; bx += pitch) {
      const mid = Math.abs(bx - x - w / 2) < w / 5 && Math.abs(by - y - h / 2) < h / 3;
      const c = mid && rand() < .5 ? "g" : mix[Math.floor(rand() * mix.length)];
      paths[c] = (paths[c] || "") + cross(bx, by);
    }
  }
  return silk(x, y, w, h) + ballPaths(paths);
}

// processor: staggered outer rows, open lattice inside
function processor(x, y, size) {
  const paths = { g: "", t: "", y: "" };
  for (let r = 0; r < 39; r++) {
    for (let c = r % 2; c < 39; c += 2) {
      const bx = x + 3 + c * 6, by = y + 3 + r * 6;
      const edge = Math.min(c, r, 38 - c, 38 - r);
      if (edge > 6) continue;
      const k = Math.sin(c * .45) + Math.cos(r * .5) + rand();
      paths[k > 1.6 ? "t" : rand() < .12 ? "g" : "y"] += cross(bx, by);
    }
  }
  for (let by = y + 45; by < y + size - 42; by += 12) {
    for (let bx = x + 45; bx < x + size - 42; bx += 12) {
      const mid = Math.abs(bx - x - size / 2) < 48;
      paths[rand() < (mid ? .45 : .2) ? "g" : rand() < .06 ? "t" : "y"] += cross(bx, by) + (rand() < .25 ? cross(bx + 6, by + 6) : "");
    }
  }
  return silk(x, y, size, size) + ballPaths(paths) + `<circle cx="${x + 119}" cy="${y + 119}" r="6" fill="${COLORS.b}"/>`;
}

// memory: banks of balls in two columns
function memory(x, y) {
  const paths = { y: "", g: "", t: "" };
  const banks = [[18, 5, 6, 3], [18, 65, 6, 3], [18, 146, 6, 3], [18, 206, 6, 3], [120, 5, 3, 20]];
  banks.forEach(([bx, by, nx, ny]) => {
    for (let r = 0; r < ny; r++) for (let c = 0; c < nx; c++) {
      paths[rand() < .25 ? "g" : "y"] += cross(x + bx + c * 12, y + by + r * 12);
    }
  });
  for (let c = 0; c < 5; c++) paths.t += cross(x + 18 + c * 11, y + 118);
  for (let r = 0; r < 5; r++) paths[r % 2 ? "g" : "y"] += cross(x + 66, y + 89 + r * 12) + cross(x + 78, y + 89 + r * 12) + cross(x + 110, y + 89 + r * 12) + cross(x + 156, y + 89 + r * 12);
  [[2, 5], [2, 228], [162, 5], [174, 5], [162, 228], [174, 228]].forEach(([a, b]) => paths.t += cross(x + a, y + b));
  return silk(x, y, 179, 238) + ballPaths(paths);
}

function circle(x, y, r, c) {
  return `<circle cx="${x}" cy="${y}" r="${r}" fill="${COLORS[c]}"/>`;
}

function drawSheet(s) {
  let out = `<g transform="translate(${s.origin}) scale(${1 / 3})">`;
  out += rows(s.fields).map(field).join("");
  out += rows(s.chips).map(chip).join("");
  out += rows(s.parts).map(part).join("");
  out += rows(s.balls).map(balls).join("");
  out += rows(s.rects).map(r => rect(...r)).join("");
  out += rows(s.ellipses).map(([x, y, a, b]) => `<ellipse cx="${x}" cy="${y}" rx="${a}" ry="${b}" fill="${COLORS.g}"/>`).join("");
  out += rows(s.holes).map(([x, y, a, b, c]) => circle(x, y, a, c) + circle(x, y, b, "w")).join("");
  out += rows(s.dots).map(d => circle(...d)).join("");
  out += rows(s.rings).map(([x, y, r]) => `<circle class="silk" cx="${x}" cy="${y}" r="${r}"/>`).join("");
  return out + (s.extra || "") + "</g>";
}

const marks = [[703, 267], [1153, 267], [703, 667], [1153, 667]];

document.getElementById("board").innerHTML =
  OUTLINES.map(d => `<path class="edge" d="${d}"/>`).join("") +
  `<g shape-rendering="crispEdges">` + SHEETS.map(drawSheet).join("") +
  `<g transform="translate(1180 355) scale(${1 / 3})">${processor(166, 343, 238)}${memory(454, 321)}</g></g>` +
  `<text class="ref" x="1110" y="523">HL1AREM</text>` +
  marks.map(([x, y]) => `<text class="mark" transform="translate(${x + 5} ${y + 5}) rotate(-45)">XZZ@XZZHK</text>`).join("");
```
